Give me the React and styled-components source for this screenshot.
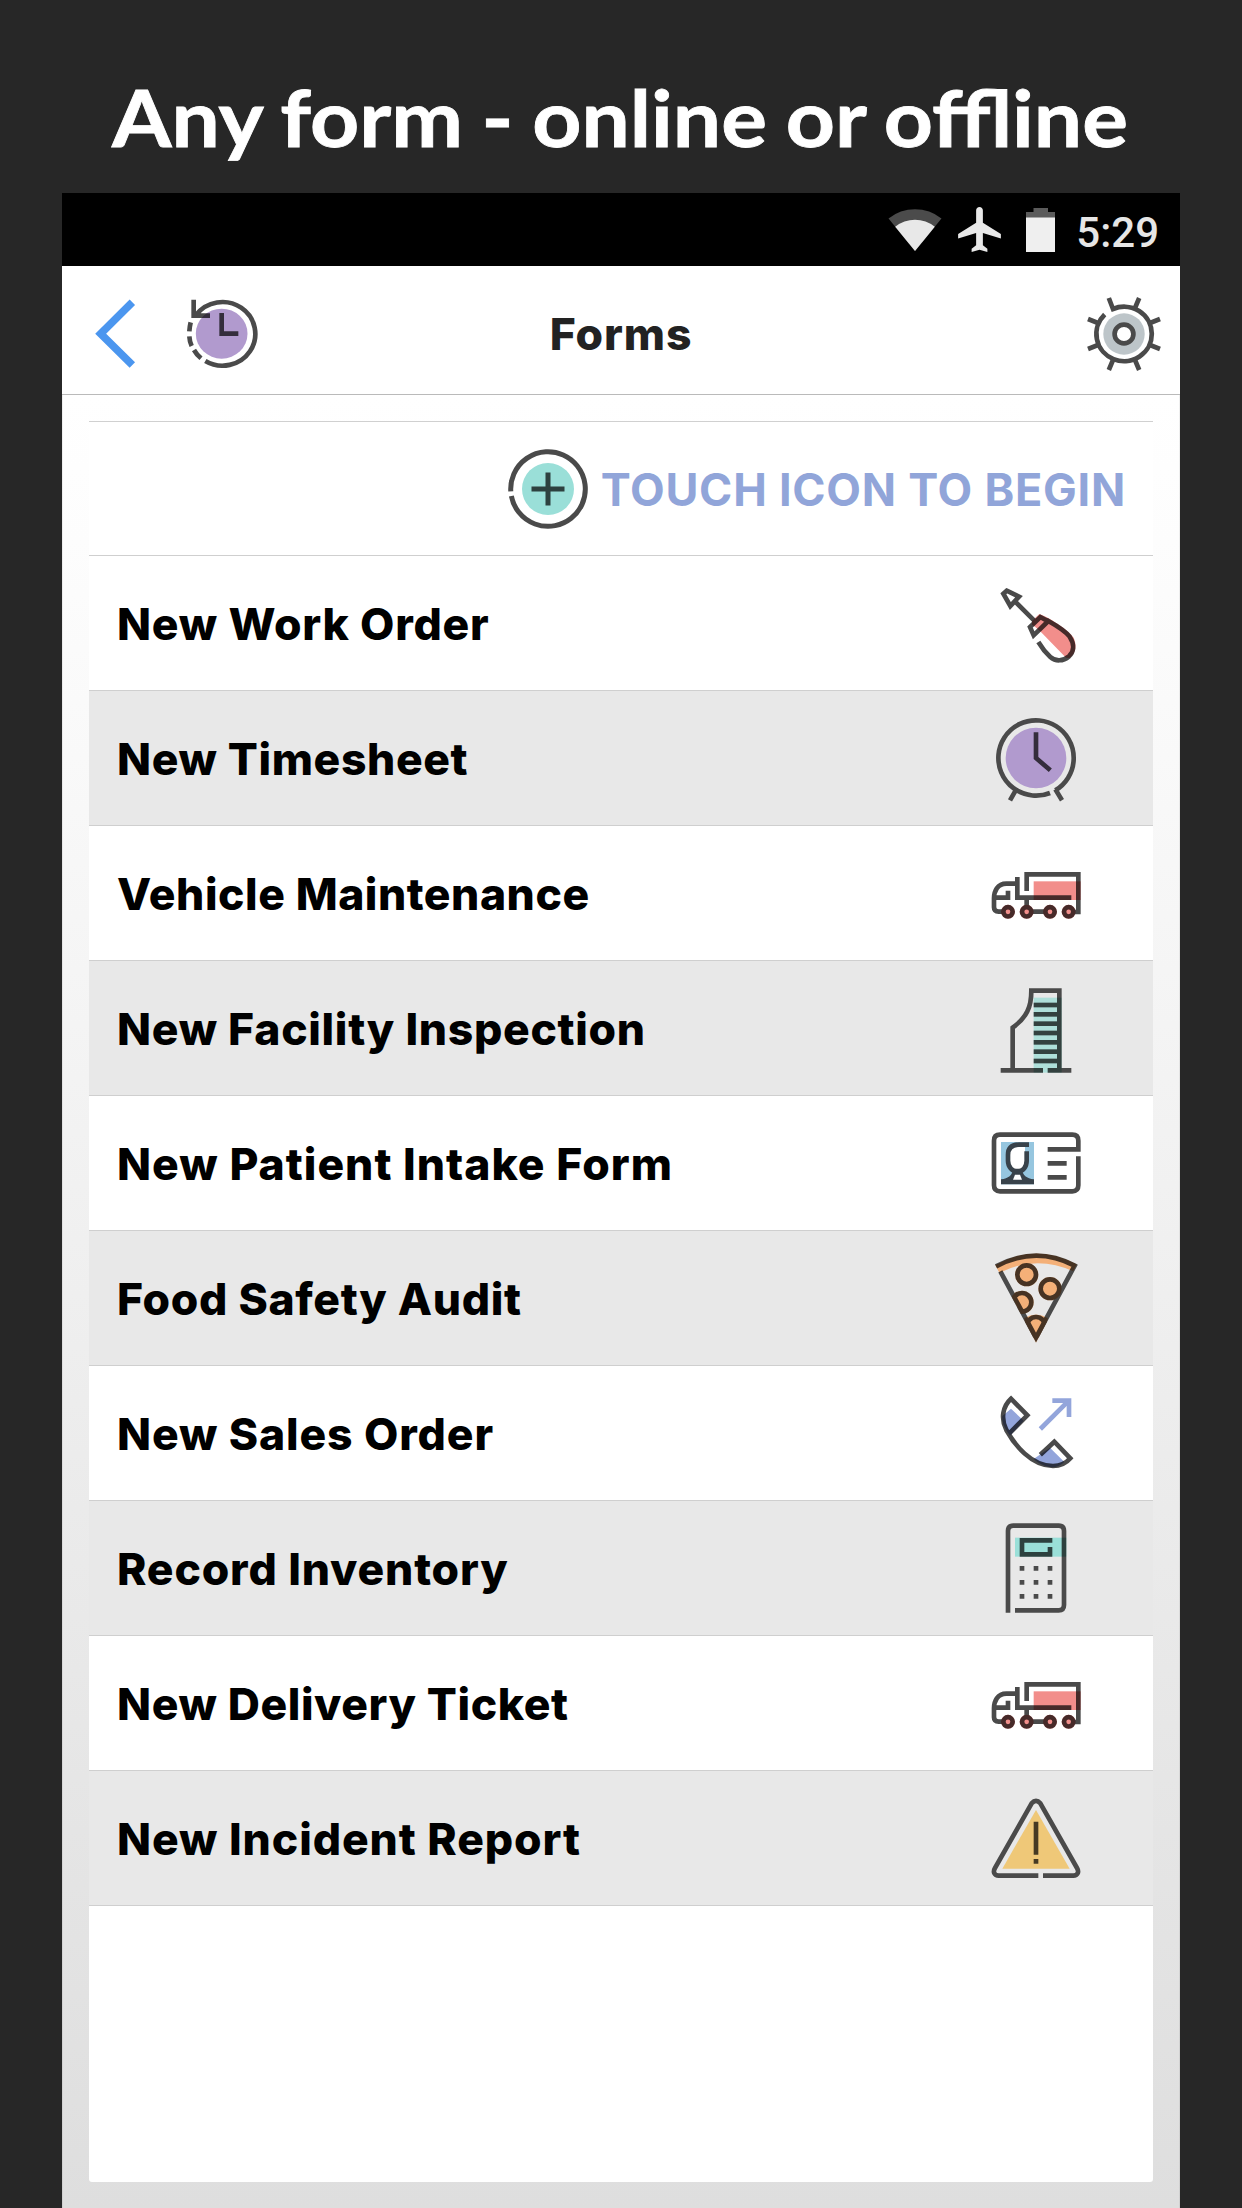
import React from 'react';
import styled, { createGlobalStyle } from 'styled-components';

const GlobalStyle = createGlobalStyle`
  * { box-sizing: border-box; }
  body { margin: 0; background: #272727; }
`;

const Page = styled.main`
  display: flex;
  flex-direction: column;
  align-items: center;
  width: 1242px;
  height: 2208px;
  overflow: hidden;
  background: #272727;
`;

const Headline = styled.h1`
  display: flex;
  align-items: center;
  justify-content: center;
  width: 100%;
  height: 193px;
  margin: 0;
  padding-top: 40px;
  color: #fff;
  font: 700 79px/96px Lato, 'Open Sans', sans-serif;
  word-spacing: -2px;
  white-space: nowrap;
  -webkit-text-stroke: 0.8px #fff;
  transform: translateX(-1px) scaleX(1.085);
`;

const Phone = styled.section`
  display: flex;
  flex-direction: column;
  width: 1118px;
  flex: 1;
  background: #fff;
`;

const StatusBar = styled.div`
  display: flex;
  align-items: center;
  justify-content: flex-end;
  height: 73px;
  padding: 0 21px 0 0;
  background: #000;
  svg { display: block; }
`;

const StatusIcon = styled.svg`
  flex: none;
  margin-right: ${(p) => p.$gap}px;
`;

const Time = styled.span`
  padding-top: 6px;
  color: #e6e6e6;
  font: 500 42px/50px Roboto, sans-serif;
`;

const Header = styled.header`
  display: grid;
  grid-template-columns: 1fr auto 1fr;
  align-items: center;
  height: 129px;
  padding: 8px 16px 0 32px;
  border-bottom: 1px solid #bababa;
  background: #fff;
`;

const HeaderSide = styled.div`
  display: flex;
  align-items: center;
  gap: 49px;
  justify-content: ${(p) => (p.$end ? 'flex-end' : 'flex-start')};
  svg { display: block; }
`;

const HeaderTitle = styled.h2`
  margin: 0 0 0 -16px;
  color: #222;
  font: 800 44.5px/54px Inter, sans-serif;
  letter-spacing: 0.9px;
`;

const Body = styled.div`
  flex: 1;
  padding: 26px 27px;
  background: linear-gradient(#fff, #fdfdfd 8%, #dedede);
  box-shadow: inset 1px 0 #00000010, inset -1px 0 #00000010;
`;

const Card = styled.div`
  height: 1761px;
  border-top: 1px solid #d0d0d0;
  border-radius: 0 0 3px 3px;
  background: #fff;
`;

const Hint = styled.div`
  display: flex;
  align-items: center;
  justify-content: flex-end;
  gap: 13px;
  height: 134px;
  padding-right: 27px;
  border-bottom: 1px solid #cfcfcf;
  color: #91a5d9;
  font: 700 45px/54px Inter, sans-serif;
  letter-spacing: 0.75px;
  span { padding-top: 2px; }
`;

const Row = styled.div`
  display: flex;
  align-items: center;
  justify-content: space-between;
  height: 135px;
  padding: 0 71.67px 0 28px;
  border-bottom: 1px solid #cfcfcf;
  background: ${(p) => (p.$shaded ? '#e8e8e8' : '#fff')};
`;

const RowLabel = styled.span`
  padding-top: 2px;
  color: #000;
  font: 800 44.5px/54px Inter, sans-serif;
  letter-spacing: ${(p) => p.$track}px;
  white-space: nowrap;
`;

const Glyph = styled.svg`
  display: block;
  flex: none;
  isolation: isolate;
  fill: none;
  stroke: #4a4a4a;
  stroke-width: ${(p) => p.$stroke || 14};
  .tint { mix-blend-mode: multiply; stroke: none; }
`;

const TRUCK = (
  <>
    <path d="M201 183V133H356V246H346M173 141V203H335M173 161H140C113 161 103 184 103 205V232Q103 245 117 245H128M103 203H145V182M201 203V230M218 245H254" />
    {[145, 201, 271, 327].map((x) => (
      <circle key={x} cx={x} cy="245.5" r="14" />
    ))}
    <g className="tint" fill="#f28e8b">
      <rect x="222" y="154" width="141" height="56" />
      {[145, 201, 271, 327].map((x) => (
        <circle key={x} cx={x} cy="245.5" r="21" />
      ))}
    </g>
  </>
);

const ICONS = {
  screwdriver: (
    <>
      <path d="M141 92L178 110L152 138L131 101ZM166 124L226 184" />
      <path d="M266 184L242 171L211 201L222 226L266 183C298 201 320 217 330 230C347 256 341 277 328 289C310 304 288 305 272 291C261 281 248 266 236 246" />
      <path className="tint" fill="#f28e8b" d="M217 183L239 162C280 178 330 214 341 232C354 258 347 281 330 294L319 293L243 215L226 200L217 194Z" />
    </>
  ),
  clock: (
    <>
      <path d="M307 721L287 688M271 698.9A113 113 0 1 1 287 691M151 721L168 691M229 517V594L272 631" />
      <circle className="tint" cx="229" cy="594" r="91" fill="#b19ace" />
    </>
  ),
  truck: TRUCK,
  building: (
    <>
      <path d="M159 720V593C202 562 215 530 215 482H299V720M123 721H250M264 721H335" />
      {[525, 553, 581, 609, 637, 665, 693].map((y) => (
        <path key={y} d={`M222 ${y}H292`} />
      ))}
      <rect className="tint" x="222" y="503" width="84" height="225" fill="#aedfd9" />
    </>
  ),
  idcard: (
    <>
      <rect x="124" y="126" width="99" height="127" fill="#96c6df" stroke="none" />
      <path fill="#fff" stroke="none" d="M196 140H178C155 140 150 150 150 165V182C150 198 160 210 173 210S196 198 196 182Z" />
      <path fill="#38424a" stroke="none" d="M124 253V238C146 235 159 226 160 206H187C188 226 201 235 223 238V253Z" />
      <path fill="#fff" stroke="none" d="M166 224H181L187 239H160Z" />
      <path stroke="#38424a" d="M208 134H178C155 134 145 146 145 165V182C145 200 158 215 173 215C190 215 201 200 201 182V154" />
      <path d="M264 148H356V122Q356 104 338 104H121Q103 104 103 122V256Q103 274 121 274H338Q356 274 356 256V169M264 190H321M264 232H321" />
    </>
  ),
  pizza: (
    <>
      <defs>
        <clipPath id="slice">
          <path d="M106 495Q229 425 352 493L229 728Z" />
        </clipPath>
      </defs>
      <path d="M109 499Q229 436 345 497L229 713L122 514" />
      <g clipPath="url(#slice)">
        <circle cx="201" cy="524" r="28" />
        <circle cx="271" cy="566" r="28" />
        <circle cx="187" cy="607" r="28" />
        <circle cx="229" cy="679" r="28" />
      </g>
      <g className="tint" fill="#f4b078" clipPath="url(#slice)">
        <path d="M106 495Q229 425 352 493L341 514Q229 463 119 519Z" />
        <circle cx="201" cy="524" r="35" />
        <circle cx="271" cy="566" r="35" />
        <circle cx="187" cy="607" r="35" />
        <path d="M194 654Q229 633 264 654V728H194Z" />
      </g>
    </>
  ),
  call: (
    <>
      <path d="M149 190L203 136L154 86C130 108 122 145 140 180C165 225 215 288 280 288C303 288 320 279 332 265L284 215L242 254" />
      <g className="tint" fill="#93a5db">
        <path d="M154 116L192 152L151 197C135 176 125 154 128 138Z" />
        <path d="M271 233L314 276C286 304 248 290 222 267Z" />
      </g>
      <path stroke="#93a5db" d="M242 177L325 94M278 92H328V141" />
    </>
  ),
  calculator: (
    <>
      <path d="M145 728V483Q145 467 161 467H297Q313 467 313 483V705Q313 721 297 721H166M278 511H187V553H271V531" />
      {[595, 637, 679].map((y) => (
        <path key={y} d={`M180 ${y}H194M222 ${y}H236M264 ${y}H278`} />
      ))}
      <rect className="tint" x="166" y="503" width="154" height="57" fill="#9adfd8" />
    </>
  ),
  warning: (
    <>
      <path d="M236 707H117C104 707 99 696 106 684L216 490Q229 475 242 490L352 684C359 696 354 707 341 707H250M229 545V644M229 657V671" />
      <path className="tint" d="M229 510L330 686H128Z" fill="#efc878" />
    </>
  ),
};

const FORMS = [
  { label: 'New Work Order', icon: 'screwdriver', track: 0.75 },
  { label: 'New Timesheet', icon: 'clock', track: 0.6 },
  { label: 'Vehicle Maintenance', icon: 'truck', track: 0.52 },
  { label: 'New Facility Inspection', icon: 'building', track: 0.68 },
  { label: 'New Patient Intake Form', icon: 'idcard', track: 1 },
  { label: 'Food Safety Audit', icon: 'pizza', track: 0.64 },
  { label: 'New Sales Order', icon: 'call', track: 0.85 },
  { label: 'Record Inventory', icon: 'calculator', track: 0.84 },
  { label: 'New Delivery Ticket', icon: 'truck', track: 0.57 },
  { label: 'New Incident Report', icon: 'warning', track: 0.9 },
];

const LOWER = ['clock', 'building', 'pizza', 'calculator', 'warning'];

const FormIcon = ({ name }) => (
  <Glyph width="90" height="90" viewBox={`94 ${LOWER.includes(name) ? 459 : 54} 270 270`}>
    {ICONS[name]}
  </Glyph>
);

const BackIcon = () => (
  <Glyph $stroke={23} width="42" height="70" viewBox="44 90 126 210">
    <path d="M159 100L64 194L159 288" stroke="#4b96ef" />
  </Glyph>
);

const HistoryIcon = () => (
  <Glyph width="74" height="70" viewBox="318 90 222 210">
    <path d="M379 276A98.5 95.5 0 1 0 351 138M344 92V140H393M335 160Q332 172 331 187M331 202Q332 219 338 231M345 243Q353 257 366 268M428 132V194H478" />
    <ellipse className="tint" cx="428" cy="194" rx="77.5" ry="75" fill="#b19ace" />
  </Glyph>
);

const GearIcon = () => (
  <Glyph $stroke={4.7} width="80" height="80" viewBox="-40 -40 80 80">
    <circle r="20.7" fill="#bdc5c9" stroke="none" />
    <circle r="9.4" fill="#fff" />
    <path d="M-15.2 -36L-11 -25A27.7 27.2 0 1 1 -19.3 -19.5" />
    <path d="M15.2 -36L11 -26M36 -15L26 -11M36 15L26 11M15.2 36L11 26M-15.2 36L-11 26M-36 15L-26 11M-36 -15L-26 -11" />
  </Glyph>
);

const PlusIcon = () => (
  <Glyph $stroke={5} width="80" height="80" viewBox="-40 -40 80 80">
    <path d="M-37.22 2.4A37.3 37.3 0 1 1 -36.64 7" />
    <path d="M-16.5 0H16.5M0 -16.5V16.5" />
    <circle className="tint" r="26" fill="#9adfd8" />
  </Glyph>
);

export default function App() {
  return (
    <Page>
      <GlobalStyle />
      <Headline>Any form - online or offline</Headline>
      <Phone>
        <StatusBar>
          <StatusIcon $gap={16} width="54" height="44" viewBox="-27 -43 54 44">
            <path d="M0 0L-26.5 -32.4A41.9 41.9 0 0 1 26.5 -32.4Z" fill="#4b4b4b" />
            <path d="M0 0L-19.8 -24.2A31.3 31.3 0 0 1 19.8 -24.2Z" fill="#e8e8e8" />
          </StatusIcon>
          <StatusIcon $gap={25} width="43" height="45" viewBox="2 2 19 20">
            <path fill="#e8e8e8" d="M21 16v-2l-8-5V3.5c0-.83-.67-1.5-1.5-1.5S10 2.67 10 3.5V9l-8 5v2l8-2.5V19l-2 1.5V22l3.5-1 3.5 1v-1.5L13 19v-5.5l8 2.5z" />
          </StatusIcon>
          <StatusIcon $gap={21} width="29" height="44" viewBox="0 0 29 44">
            <path d="M7.5 0H22V4H29V10H0V4H7.5Z" fill="#5b5b5b" />
            <rect y="9.5" width="29" height="34.5" fill="#efefef" />
          </StatusIcon>
          <Time>5:29</Time>
        </StatusBar>
        <Header>
          <HeaderSide>
            <BackIcon />
            <HistoryIcon />
          </HeaderSide>
          <HeaderTitle>Forms</HeaderTitle>
          <HeaderSide $end>
            <GearIcon />
          </HeaderSide>
        </Header>
        <Body>
          <Card>
            <Hint>
              <PlusIcon />
              <span>TOUCH ICON TO BEGIN</span>
            </Hint>
            {FORMS.map(({ label, icon, track }, i) => (
              <Row key={label} $shaded={i % 2 === 1}>
                <RowLabel $track={track}>{label}</RowLabel>
                <FormIcon name={icon} />
              </Row>
            ))}
          </Card>
        </Body>
      </Phone>
    </Page>
  );
}
